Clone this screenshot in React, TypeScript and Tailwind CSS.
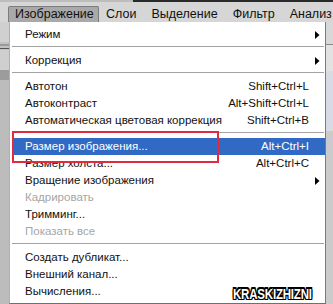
import React from 'react';

type Item =
  | { kind: 'row'; label: string; shortcut?: string; arrow?: boolean; disabled?: boolean; active?: boolean }
  | { kind: 'sep' };

const items: Item[] = [
  { kind: 'row', label: 'Режим', arrow: true },
  { kind: 'sep' },
  { kind: 'row', label: 'Коррекция', arrow: true },
  { kind: 'sep' },
  { kind: 'row', label: 'Автотон', shortcut: 'Shift+Ctrl+L' },
  { kind: 'row', label: 'Автоконтраст', shortcut: 'Alt+Shift+Ctrl+L' },
  { kind: 'row', label: 'Автоматическая цветовая коррекция', shortcut: 'Shift+Ctrl+B' },
  { kind: 'sep' },
  { kind: 'row', label: 'Размер изображения...', shortcut: 'Alt+Ctrl+I', active: true },
  { kind: 'row', label: 'Размер холста...', shortcut: 'Alt+Ctrl+C' },
  { kind: 'row', label: 'Вращение изображения', arrow: true },
  { kind: 'row', label: 'Кадрировать', disabled: true },
  { kind: 'row', label: 'Тримминг...' },
  { kind: 'row', label: 'Показать все', disabled: true },
  { kind: 'sep' },
  { kind: 'row', label: 'Создать дубликат...' },
  { kind: 'row', label: 'Внешний канал...' },
  { kind: 'row', label: 'Вычисления...' },
];

const menuBar = ['Слои', 'Выделение', 'Фильтр', 'Анализ'];

const Arrow = ({ white }: { white?: boolean }) => (
  <svg width="5" height="8" viewBox="0 0 5 8" className="mr-[5px]">
    <path d="M0 0 L4.5 4 L0 8 Z" fill={white ? '#fff' : '#000'} />
  </svg>
);

export default function App() {
  return (
    <div className="relative w-[333px] h-[304px] overflow-hidden bg-[#c4c4c4] font-['Liberation_Sans',Arial,sans-serif] text-[#111]">
      {/* window top strip */}
      <div className="flex h-[2px]">
        <div className="w-[133px] bg-[#bdbdbd]" />
        <div className="flex-1 bg-[#2a2a2a]" />
      </div>

      {/* menu bar */}
      <div className="flex items-end h-[20px] bg-[#d6d6d6] pl-[8px] text-[12.5px] whitespace-nowrap">
        <div className="h-[16px] w-[91px] flex items-center pl-[6px] bg-[#a9a9a9] border border-b-0 border-[#7c7c7c] rounded-t-[2px]">
          Изображение
        </div>
        <div className="flex h-[16px] items-center gap-[15px] pl-[7px]">
          {menuBar.map((m) => (
            <span key={m}>{m}</span>
          ))}
        </div>
      </div>

      <div className="flex h-[282px]">
        {/* left panel edge */}
        <div className="w-[9px] flex flex-col bg-[#c2c2c2]">
          <div className="h-[20px] bg-[#d0d0d0]" />
          <div className="h-[2px] mt-[2px] bg-[#9a9a9a]" />
          <div className="h-[1px] mt-[2px] bg-[#555]" />
          <div className="h-[20px] mt-[1px] bg-[#cfcfcf]" />
          <div className="h-[10px] bg-[#9c9c9c]" />
          <div className="flex-1 bg-[#bcbcbc]" />
        </div>

        {/* dropdown */}
        <div className="w-[317px] bg-white border-l border-[#b0b0b0] border-r border-r-[#7a7a7a] border-b border-b-[#6f6f6f] pt-[4px] text-[11.5px]">
          {items.map((it, i) =>
            it.kind === 'sep' ? (
              <div key={i} className="pt-[3px] pb-[5px] ml-[2px] mr-[1px]">
                <div className="h-[1px] bg-[#a3a3a3]" />
              </div>
            ) : (
              <div
                key={i}
                className={
                  'flex items-center h-[17px] ml-[2px] pl-[13px] ' +
                  (it.active ? 'bg-[#316ac5] text-white' : it.disabled ? 'text-[#a6a6a6]' : '')
                }
              >
                <span className="whitespace-nowrap">{it.label}</span>
                <span className="flex-1" />
                {it.shortcut && <span className="mr-[16px] whitespace-nowrap">{it.shortcut}</span>}
                {it.arrow && <Arrow white={it.active} />}
              </div>
            )
          )}
        </div>

        {/* right panel edge */}
        <div className="flex-1 flex flex-col bg-[#c6c6c6]">
          <div className="h-[22px] bg-[#d8d8d8]" />
          <div className="h-[1px] bg-[#8a8a8a]" />
          <div className="h-[26px] bg-[#e2e2e2]" />
          <div className="h-[60px] bg-[#d7dbe6]" />
          <div className="flex-1 bg-[#cbcbcb]" />
        </div>
      </div>

      {/* annotation frame */}
      <div className="absolute left-[12px] top-[131px] w-[207px] h-[32px] border-2 border-[#e12a3f]" />

      {/* watermark */}
      <div className="absolute left-[233px] top-[287px] text-[11.5px] font-bold leading-none tracking-[-0.2px] text-white scale-y-[1.3] origin-top [text-shadow:1px_0_0_#000,-1px_0_0_#000,0_1px_0_#000,0_-1px_0_#000,1px_1px_0_#000,-1px_-1px_0_#000,1px_-1px_0_#000,-1px_1px_0_#000]">
        KRASKIZHIZNI
      </div>
    </div>
  );
}
